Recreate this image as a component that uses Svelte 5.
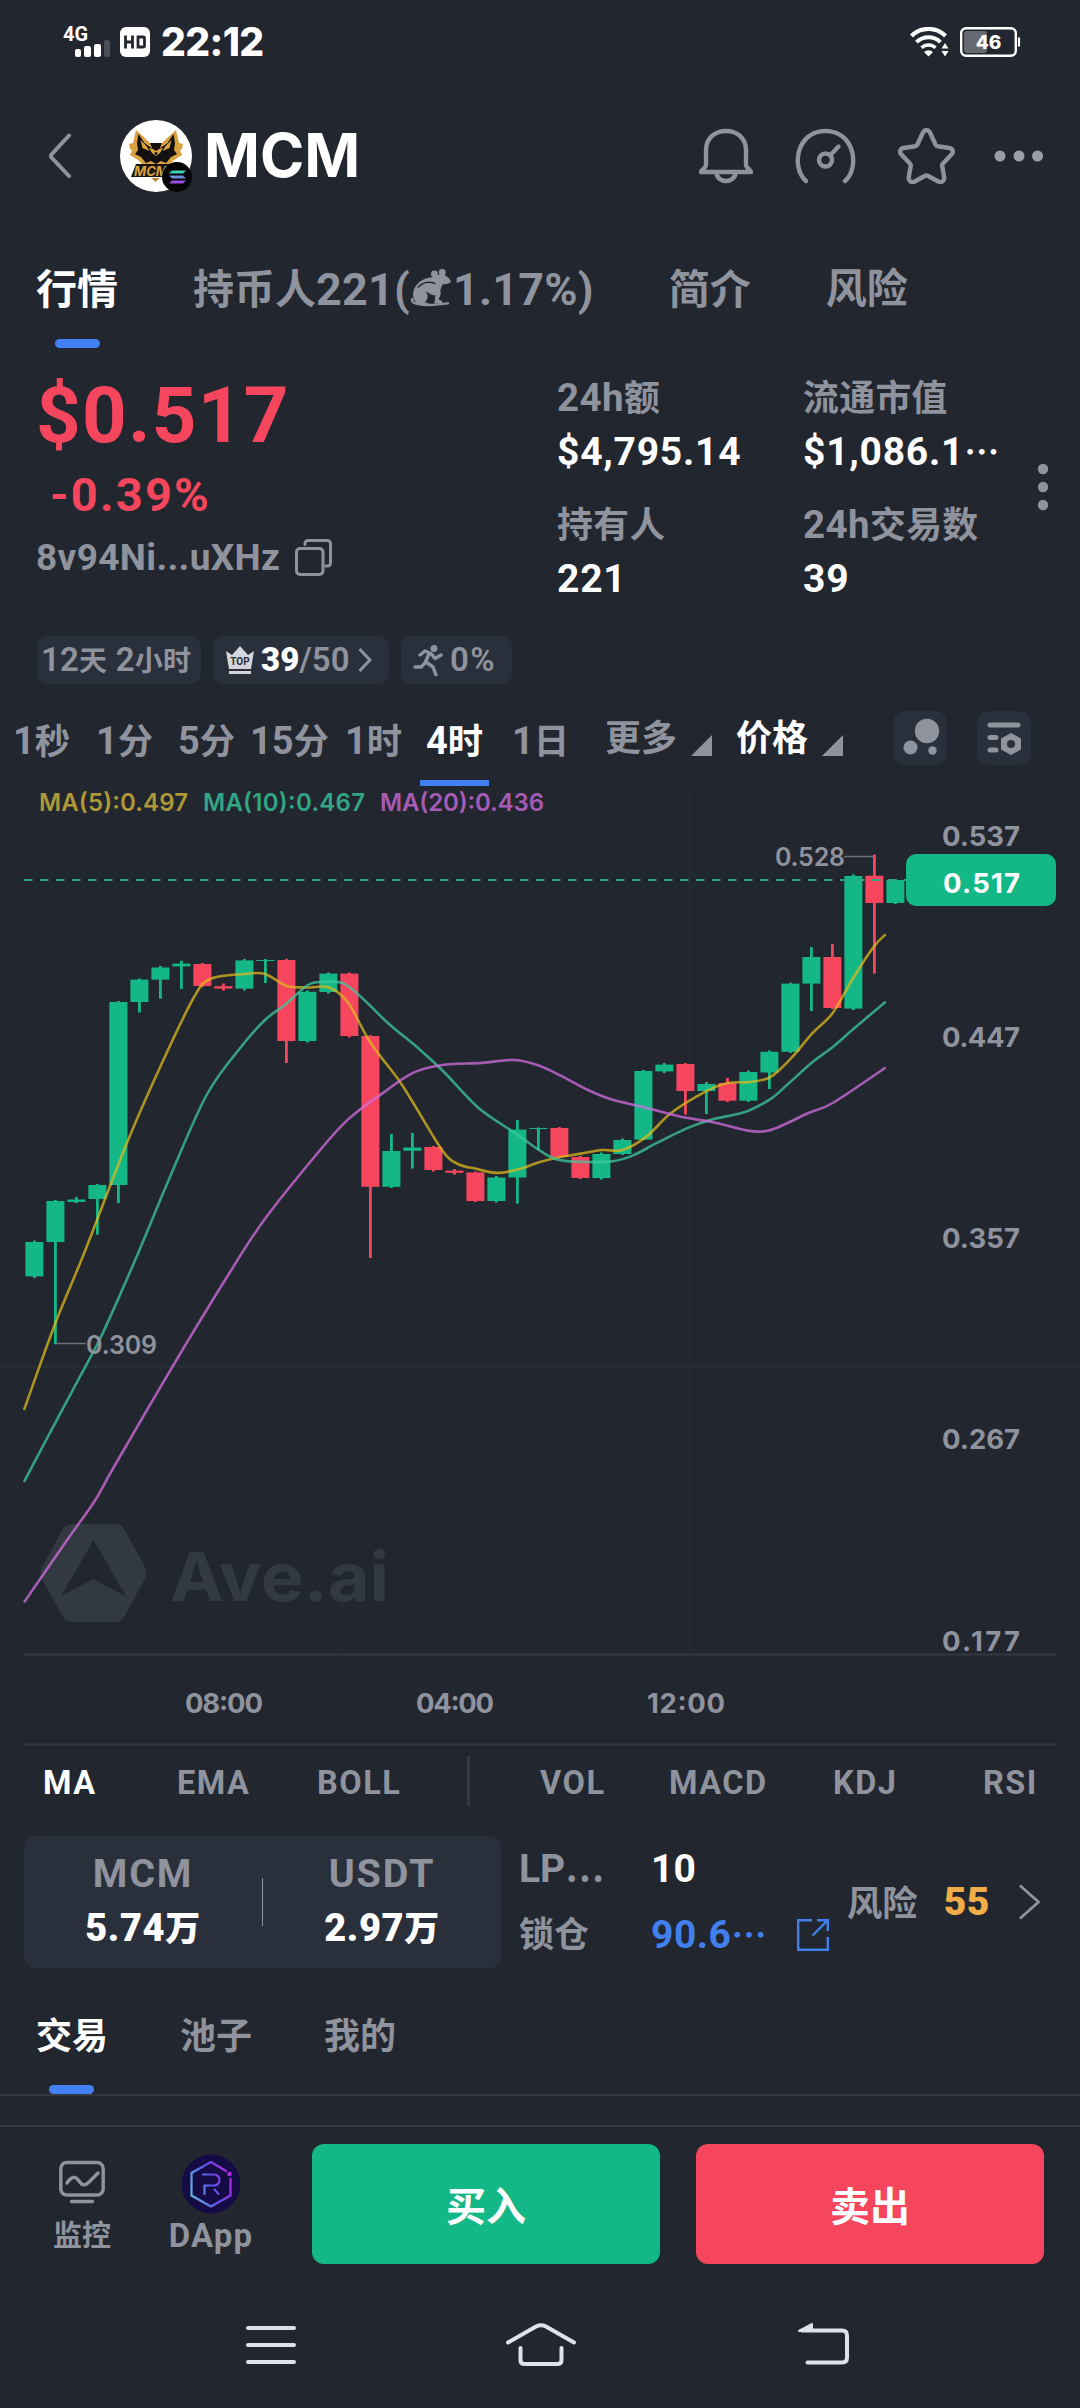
<script>
	const infoTabs = ['行情', 'holders', '简介', '风险'];
	let activeInfo = '行情';

	const stats = [
		{ num: '24h', han: '额', value: '$4,795.14' },
		{ num: '', han: '流通市值', value: '$1,086.1', more: true },
		{ num: '', han: '持有人', value: '221' },
		{ num: '24h', han: '交易数', value: '39' }
	];

	const periods = [
		['1', '秒'],
		['1', '分'],
		['5', '分'],
		['15', '分'],
		['1', '时'],
		['4', '时'],
		['1', '日']
	];
	let activePeriod = 5;

	const mainIndicators = ['MA', 'EMA', 'BOLL'];
	const subIndicators = ['VOL', 'MACD', 'KDJ', 'RSI'];
	let activeIndicator = 'MA';

	const listTabs = ['交易', '池子', '我的'];
	let activeList = '交易';

	// chart: [up, body top, body bottom, wick top, wick bottom]
	const candles = [
		[1, 1242, 1276.4, 1240.5, 1278],
		[1, 1201, 1242, 1200, 1344.3],
		[1, 1199.5, 1202, 1197, 1203],
		[1, 1185, 1199, 1184, 1234.6],
		[1, 1002, 1185, 1001, 1203],
		[1, 979.6, 1002, 978.6, 1012.5],
		[1, 967.5, 979.6, 966, 998.6],
		[1, 963.6, 966.4, 960.7, 989],
		[0, 964, 986, 963, 987],
		[0, 986.2, 988.6, 983.5, 990.5],
		[1, 960.4, 988.6, 959, 990.4],
		[1, 960, 961, 959, 983],
		[0, 960, 1041, 958.8, 1063],
		[1, 991.8, 1041, 990.5, 1042.5],
		[1, 973.6, 992, 972.5, 993.5],
		[0, 973.6, 1036, 972.5, 1037.5],
		[0, 1036, 1186.8, 1035, 1258],
		[1, 1151, 1186.8, 1134, 1188],
		[1, 1147.5, 1150.8, 1133, 1168.6],
		[0, 1147, 1170, 1146, 1171.5],
		[0, 1170.6, 1172.8, 1169, 1174.5],
		[0, 1172.5, 1201, 1171.5, 1202],
		[1, 1177.5, 1201, 1176, 1202.5],
		[1, 1129.6, 1177.5, 1120, 1203.6],
		[1, 1128, 1129, 1127.5, 1150],
		[0, 1128, 1157, 1127, 1158],
		[0, 1157, 1178, 1156, 1179],
		[1, 1154, 1178, 1152.5, 1179.5],
		[1, 1140, 1154, 1138.5, 1155],
		[1, 1071, 1139.6, 1070, 1140],
		[1, 1064.6, 1071.4, 1063, 1073],
		[0, 1064, 1091, 1063, 1114.6],
		[1, 1084, 1091, 1082, 1114],
		[0, 1083, 1100.7, 1078, 1102],
		[1, 1072, 1100.7, 1070.5, 1102],
		[1, 1051.8, 1072.5, 1050.5, 1089],
		[1, 983.6, 1051.8, 982.5, 1053],
		[1, 957, 983.6, 947, 1011],
		[0, 957, 1008, 944, 1009],
		[1, 876, 1008.6, 874.5, 1010],
		[0, 875.7, 903, 854.6, 973.6],
		[1, 880, 903, 879, 904]
	];
	const candleX = (i) => 34.4 + i * 21;

	const ma5 = [
		[24, 1410], [55.4, 1323], [85.4, 1250], [127.4, 1141.8], [162, 1063], [193, 999], [210, 979],
		[244.5, 974], [265, 974], [286, 985.7], [306.5, 987.5], [329, 987.5], [348, 1002.5], [370, 1042],
		[398, 1079], [413, 1102.5], [442.5, 1150.7], [458, 1164], [475, 1168.6], [496.6, 1172.9],
		[517.6, 1169.6], [540, 1162], [560.7, 1157], [581, 1153.6], [602, 1150], [622.6, 1150],
		[646.7, 1136.4], [671, 1113], [705, 1091.8], [727.7, 1083], [750, 1082], [770.7, 1076.8],
		[791.4, 1057.9], [812, 1033.6], [832.7, 1013], [853.4, 977.5], [874, 946.4], [885.7, 934.3]
	];
	const ma10 = [
		[24, 1481.8], [44.8, 1442.5], [79.2, 1378], [93.7, 1351], [106.7, 1324.6], [139.5, 1250],
		[168.7, 1180], [206.6, 1095], [241, 1047], [265, 1020], [286, 1004], [308, 985],
		[323.7, 982], [344, 983.6], [365, 1000.7], [389, 1024], [418, 1048], [444, 1072], [478.6, 1107.9],
		[516.5, 1134], [540, 1150.7], [557, 1159.6], [578, 1161.8], [612, 1161.4], [633, 1155.4],
		[657, 1142.9], [688, 1127.9], [712, 1119.6], [746.6, 1111.4], [770.7, 1098.9], [788, 1084],
		[812, 1062.5], [832.7, 1047], [853.4, 1029], [885.7, 1001.8]
	];
	const ma20 = [
		[24, 1602.5], [65.4, 1542.5], [94.7, 1501], [113.6, 1467.5], [172, 1367.5], [224, 1281.8],
		[263.4, 1221], [316.8, 1154], [347.8, 1119.6], [382, 1093.6], [413, 1072.9],
		[442.5, 1065], [482, 1062.9], [514.8, 1060], [540, 1066], [560.7, 1075.7], [588, 1090],
		[612, 1099.6], [643, 1107], [681, 1116.8], [712, 1122], [746.6, 1130.4], [763.8, 1131.4],
		[777.6, 1127.5], [808.6, 1113], [832.7, 1103], [885.7, 1067.5]
	];

	// smooth curve through all the points
	function curve(p) {
		let d = `M${p[0][0]} ${p[0][1]}`;
		for (let i = 0; i < p.length - 1; i++) {
			const a = p[i - 1] || p[i];
			const b = p[i];
			const c = p[i + 1];
			const e = p[i + 2] || c;
			d += `C${b[0] + (c[0] - a[0]) / 6} ${b[1] + (c[1] - a[1]) / 6} ${c[0] - (e[0] - b[0]) / 6} ${c[1] - (e[1] - b[1]) / 6} ${c[0]} ${c[1]}`;
		}
		return d;
	}

	const priceAxis = [
		['0.537', 846],
		['0.447', 1047],
		['0.357', 1248],
		['0.267', 1449],
		['0.177', 1650.5]
	];
	const timeAxis = [
		['08:00', 185],
		['04:00', 416],
		['12:00', 647]
	];
</script>

<div class="screen">
	<div class="status">
		<svg class="signal" viewBox="0 0 50 44" width="50" height="44">
			<text x="0" y="21" class="net" textLength="25" lengthAdjust="spacingAndGlyphs">4G</text>
			<rect x="12" y="29" width="6" height="8" rx="2" fill="#fff" />
			<rect x="21" y="26" width="7" height="11" rx="2" fill="#fff" />
			<rect x="31" y="24" width="7" height="13" rx="2" fill="#fff" />
			<rect x="41" y="20" width="6" height="17" rx="2" fill="#4b4f57" />
		</svg>
		<svg class="hd" viewBox="0 0 30 30" width="30" height="30">
			<rect width="30" height="30" rx="6" fill="#fff" />
			<path d="M5.500 8.500v13M12.500 8.500v13M5.500 15h7M18 10h5a1.500 1.500 0 0 1 1.500 1.500v7a1.500 1.500 0 0 1-1.500 1.500h-5z" fill="none" stroke="#22262e" stroke-width="2.800" />
		</svg>
		<span class="clock">22:12</span>
		<svg class="wifi" viewBox="0 0 39 30" width="39" height="30">
			<g fill="none" stroke="#fff" stroke-width="4.200">
				<path d="M1.500 9a24 24 0 0 1 34 0" />
				<path d="M6.500 15.200a17 17 0 0 1 24 0" stroke-width="3.800" />
				<path d="M11.500 20.800a10 10 0 0 1 14 0" stroke-width="3.400" />
			</g>
			<path d="M14 25a6.500 6.500 0 0 1 9 0l-4.500 4.500z" fill="#fff" />
			<path d="M31.500 21.500l3.500-5.500 3.500 5.500zM31.500 24l3.500 5.500 3.500-5.500z" fill="#fff" />
		</svg>
		<svg class="battery" viewBox="0 0 61 30" width="61" height="30">
			<rect x="4" y="4" width="23" height="22" rx="3" fill="#666a71" />
			<rect x="1.200" y="1.200" width="54.600" height="27.600" rx="5" fill="none" stroke="#fff" stroke-width="2.400" />
			<path d="M59 10.500v9" stroke="#fff" stroke-width="2.200" />
			<text x="28.500" y="22" text-anchor="middle" class="level">46</text>
		</svg>
	</div>

	<header>
		<svg viewBox="0 0 24 48" width="24" height="48" class="back">
			<path d="M21 3.500L3.500 22.500a2.500 2.500 0 0 0 0 3L21 44" />
		</svg>
		<div class="logo">
			<svg viewBox="0 0 72 72" width="72" height="72">
				<circle cx="36" cy="36" r="36" fill="#fff" />
				<path d="M16 10l11 10 3 3h12l3-3 11-10 3 13 4 1-1 5-2 1 2 5-8 5-6 6-5-2-7 4-7-4-5 2-6-6-8-5 2-5-2-1-1-5 4-1z" fill="#d9a13f" />
				<path d="M18.500 14l6 9 7 5h9l7-5 6-9 1.500 9-1 7 3 4-6 3-5 6-5-2-5 3-5-3-5 2-5-6-6-3 3-4-1-7z" fill="#131110" />
				<path d="M20.500 20l2 8 7 3-3-5zM51.500 20l-2 8-7 3 3-5z" fill="#d9a13f" />
				<path d="M30 23h12l-2 5-4 3-4-3z" fill="#131110" />
				<path d="M29 28l4 1 3 2 3-2 4-1-3 5-4 3-4-3z" fill="#d9a13f" />
				<circle cx="36" cy="33.500" r="1.400" fill="#131110" />
				<path d="M16 44h44l-5 13H11z" fill="#171412" />
				<text x="14" y="55.500" class="mark" textLength="34" lengthAdjust="spacingAndGlyphs">MCM</text>
				<path d="M31 58h9l-4.500 4z" fill="#b98a3a" />
			</svg>
			<svg class="chain" viewBox="0 0 30 30" width="30" height="30">
				<circle cx="15" cy="15" r="15" fill="#050507" />
				<path d="M10 8.500h14l-3 3H7z" fill="#3fd2b8" />
				<path d="M7 13.500h14l3 3H10z" fill="#6f8ddd" />
				<path d="M10 18.500h14l-3 3H7z" fill="#9a4fe8" />
			</svg>
		</div>
		<h1>MCM</h1>
		<div class="actions">
			<svg viewBox="0 0 54 56" width="54" height="56">
				<path d="M7 26v-4C7 10 16 3 27 3s20 7 20 19v15c0 3 5 5 5 7H2c0-2 5-4 5-7zM17.500 44c0 12 19 12 19 0" />
			</svg>
			<svg viewBox="0 0 61 56" width="61" height="56">
				<path d="M11 53C-4 40 1 3 30.500 3S65 40 50 53" />
				<circle cx="30.500" cy="32" r="6.500" />
				<path d="M35.500 27l8-8.500" />
			</svg>
			<svg viewBox="0 0 57 56" width="57" height="56">
				<path d="M25 4.500c1.500-3 5.500-3 7 0l5.500 12c.5 1 1 1.500 2 1.700l12 1.800c3 .5 4.500 4 2 6.500l-8.500 9c-.7.700-1 1.500-.8 2.500l2 11.500c.5 3.500-3 5.500-6 4l-10-5.500c-1-.6-2.500-.6-3.500 0l-10 5.500c-3 1.500-6.500-.5-6-4l2-11.500c.2-1-.1-1.800-.8-2.500l-8.500-9c-2.500-2.500-1-6 2-6.500l12-1.800c1-.2 1.500-.7 2-1.700z" />
			</svg>
			<svg viewBox="0 0 50 56" width="50" height="56" class="dots">
				<circle cx="6" cy="28" r="5.500" />
				<circle cx="25" cy="28" r="5.500" />
				<circle cx="43.500" cy="28" r="5.500" />
			</svg>
		</div>
	</header>

	<nav class="info-tabs">
		{#each infoTabs as tab}
			<button class:active={tab === activeInfo} on:click={() => (activeInfo = tab)}>
				{#if tab === 'holders'}
					持币人<span class="num">221(</span><svg viewBox="0 0 44 40" width="43" height="39" class="rat">
						<path d="M25 8c2-2 5-3 9-2 4 1 7 4 8 7-3 3-7 2-9 3l-2 6c1 4 0 6-2 9l4 2v2h-8l1-8c-5 0-6-3-9-3 2 3 1 8-2 10l4 1v2H9C2 33 1 23 7 16c5-6 12-7 18-8z" />
						<circle cx="25" cy="5" r="3.500" />
						<circle cx="33" cy="3.500" r="3.500" />
						<path d="M3 30c-5 6 10 9 37 5" fill="none" stroke="#8f939d" stroke-width="2.500" />
						<path d="M8 19c4-5 11-7 18-4M17 24c3 2 4 6 2 10" fill="none" stroke="#22262e" stroke-width="1.500" />
					</svg><span class="num">1.17%)</span>
				{:else}
					{tab}
				{/if}
			</button>
		{/each}
	</nav>

	<section class="quote">
		<div class="price">
			<div class="last">$0.517</div>
			<div class="change">-0.39%</div>
			<div class="address">
				<span>8v94Ni...uXHz</span>
				<svg viewBox="0 0 37 37" width="37" height="37">
					<rect x="1.500" y="9.500" width="26.500" height="26" rx="3.500" />
					<path d="M10 5.500V4.500a3 3 0 0 1 3-3h19.500a3 3 0 0 1 3 3V24a3 3 0 0 1-3 3H31" />
				</svg>
			</div>
		</div>
		<div class="stats">
			{#each stats as s}
				<div class="stat">
					<div class="label">{s.num}<span class="han">{s.han}</span></div>
					<div class="value">{s.value}{#if s.more}<span class="ell">⋯</span>{/if}</div>
				</div>
			{/each}
		</div>
		<svg class="more" viewBox="0 0 12 48" width="12" height="48">
			<circle cx="6" cy="6" r="5.200" />
			<circle cx="6" cy="24" r="5.200" />
			<circle cx="6" cy="42" r="5.200" />
		</svg>
	</section>

	<div class="chips">
		<span class="chip age">12<i>天</i> 2<i>小时</i></span>
		<span class="chip top">
			<svg viewBox="0 0 28 28" width="28" height="28">
				<path d="M0 5l6 4 8-9 8 9 6-4-3 18H3z" fill="#d3d5da" />
				<path d="M3 26.500h22" stroke="#d3d5da" stroke-width="3" />
				<text x="14" y="19" text-anchor="middle" class="crown">TOP</text>
			</svg>
			<b>39</b><span>/50</span>
			<svg viewBox="0 0 14 26" width="14" height="26" class="go"><path d="M1.500 2l10.500 11L1.500 24" /></svg>
		</span>
		<span class="chip run">
			<svg viewBox="0 0 31 31" width="31" height="31">
				<circle cx="21" cy="3.500" r="3.500" fill="#8f939d" />
				<path d="M7 10l5-4 6 2.500 4 5 6-3.500M16 9l-4 9-4 4H2M13 17l7 5 3 8" fill="none" stroke="#8f939d" stroke-width="3.400" stroke-linecap="round" stroke-linejoin="round" />
			</svg>
			<span>0%</span>
		</span>
	</div>

	<nav class="periods">
		{#each periods as [n, unit], i}
			<button class:active={i === activePeriod} on:click={() => (activePeriod = i)}>{n}<span class="han">{unit}</span></button>
		{/each}
		<span class="pick"><span>更多</span><i class="corner"></i></span>
		<span class="pick on"><span>价格</span><i class="corner"></i></span>
		<span class="tool">
			<svg viewBox="0 0 54 54" width="54" height="54">
				<circle cx="34" cy="20" r="12.200" />
				<circle cx="17.500" cy="36.500" r="7" />
				<circle cx="39.500" cy="39.500" r="4.200" />
			</svg>
		</span>
		<span class="tool">
			<svg viewBox="0 0 54 54" width="54" height="54">
				<path d="M13 14h28M13 26.500h6M13 39h6" stroke="#8f939d" stroke-width="5" stroke-linecap="round" />
				<path d="M34 23l9 5v10l-9 5-9-5V28z" stroke="#8f939d" stroke-width="2" stroke-linejoin="round" />
				<circle cx="34" cy="33" r="4" class="hole" />
			</svg>
		</span>
	</nav>

	<svg class="chart" viewBox="0 786 1080 960" width="1080" height="960">
		<!-- grid -->
		<path d="M341 786v868M689 786v868" stroke="#252a32" stroke-width="2" />
		<path d="M0 1366.500h1080" stroke="#2b3038" stroke-width="2" />
		<path d="M24 1654.500h1032M24 1744.500h1032" stroke="#343941" stroke-width="2" />

		<!-- watermark -->
		<g fill="#333941">
			<path fill-rule="evenodd" d="M72 1524h43q6 0 9 5l21 38q3 6 0 12l-21 38q-3 5-9 5H72q-6 0-9-5l-21-38q-3-6 0-12l21-38q3-5 9-5zM93.500 1540L61 1596l32.500-17 33 18z" />
			<text x="170" y="1600.500" class="brand" textLength="219" lengthAdjust="spacingAndGlyphs">Ave.ai</text>
		</g>

		<text x="39" y="811" class="ma" fill="#ae9838" textLength="149">MA(5):0.497</text>
		<text x="203" y="811" class="ma" fill="#32a585" textLength="162">MA(10):0.467</text>
		<text x="380" y="811" class="ma" fill="#a65cb6" textLength="164">MA(20):0.436</text>

		{#each candles as [up, top, bottom, high, low], i}
			<g fill={up ? '#14b886' : '#f6465d'}>
				<rect x={candleX(i) - 1.4} y={high} width="2.8" height={low - high} />
				<rect x={candleX(i) - 9} y={top} width="18" height={bottom - top} />
			</g>
		{/each}
		<path d="M24 880h882" stroke="#32a585" stroke-width="1.800" stroke-dasharray="8.500 7.500" />

		<g fill="none" stroke-width="2.600">
			<path d={curve(ma5)} stroke="#dcb81f" opacity="0.75" />
			<path d={curve(ma10)} stroke="#3ec9a0" opacity="0.75" />
			<path d={curve(ma20)} stroke="#d36fe2" opacity="0.75" />
		</g>

		<path d="M844 856.500h30M56 1343.500h30" stroke="#6d717a" stroke-width="1.500" />
		<text x="775" y="866" class="tip" textLength="70">0.528</text>
		<text x="86" y="1354" class="tip" textLength="71">0.309</text>

		{#each priceAxis as [label, y]}
			<text x="942" {y} class="axis" textLength="78">{label}</text>
		{/each}
		{#each timeAxis as [label, x]}
			<text {x} y="1712.500" class="axis" textLength="78">{label}</text>
		{/each}

		<rect x="906" y="854" width="150" height="52" rx="10" fill="#14b886" />
		<text x="943" y="892.500" class="axis current" textLength="77">0.517</text>
	</svg>

	<nav class="indicators">
		{#each mainIndicators as name}
			<button class:active={name === activeIndicator} on:click={() => (activeIndicator = name)}>{name}</button>
		{/each}
		<span class="split"></span>
		{#each subIndicators as name}
			<button>{name}</button>
		{/each}
	</nav>

	<section class="pool">
		<div class="pair">
			<div class="side"><span>MCM</span><b>5.74<i>万</i></b></div>
			<span class="line"></span>
			<div class="side"><span>USDT</span><b>2.97<i>万</i></b></div>
		</div>
		<div class="lock">
			<span class="key">LP<span class="ell">⋯</span></span>
			<span class="val">10</span>
			<span class="key"><span class="han">锁仓</span></span>
			<span class="val link">90.6<span class="ell">⋯</span></span>
			<svg viewBox="0 0 32 32" width="32" height="32">
				<path d="M15 1.200H1.200v29.600h29.600V18M20 1.200h10.800V12M30.500 1.500L15.500 16.500" />
			</svg>
		</div>
		<div class="risk">
			<span class="han">风险</span>
			<b>55</b>
			<svg viewBox="0 0 23 36" width="23" height="36"><path d="M2 1.500l18.500 16.500L2 34.500" /></svg>
		</div>
	</section>

	<nav class="list-tabs">
		{#each listTabs as tab}
			<button class:active={tab === activeList} on:click={() => (activeList = tab)}>{tab}</button>
		{/each}
	</nav>

	<footer>
		<div class="entry">
			<svg viewBox="0 0 46 60" width="46" height="60">
				<rect x="1.800" y="8.500" width="42.400" height="32.500" rx="6" />
				<path d="M12.500 47.500h21M8 29c4-6 8-8 12-2s7 4 10 1l9-9" />
			</svg>
			<span class="cn">监控</span>
		</div>
		<div class="entry dapp">
			<svg viewBox="0 0 60 60" width="60" height="60">
				<defs>
					<linearGradient id="ray" x1="0" y1="0.700" x2="1" y2="0.300">
						<stop offset="0" stop-color="#5fb4e0" />
						<stop offset="0.500" stop-color="#5a55e8" />
						<stop offset="1" stop-color="#b02be0" />
					</linearGradient>
				</defs>
				<circle cx="30" cy="30" r="29.500" fill="#160c45" />
				<path class="ray" d="M45 17L30 8 10.500 19v22.500L30 52.500l19.500-11V25M22 20.500h11a5.500 5.500 0 0 1 0 11h-9.500V40M33.500 35.500l4 4.500" />
				<circle cx="48.500" cy="20" r="2.300" fill="#a92be0" />
			</svg>
			<span>DApp</span>
		</div>
		<button class="buy">买入</button>
		<button class="sell">卖出</button>
	</footer>

	<div class="system">
		<svg viewBox="0 0 50 50" width="50" height="50"><path d="M2 8h46M2 25h46M2 42h46" /></svg>
		<svg viewBox="0 0 72 50" width="72" height="50">
			<path d="M3 22.500L31 6.500q5-2.500 10 0l28 16M15.500 28v12q0 4 4 4h33q4 0 4-4V28" />
		</svg>
		<svg viewBox="0 0 52 50" width="52" height="50">
			<path d="M4 10.500h40q5 0 5 5v22q0 5-5 5H9.500" />
			<path d="M1 11L14 4v6z" fill="#dfe2ea" stroke-width="2" stroke-linejoin="round" />
		</svg>
	</div>
</div>

<style>
	:global(body) {
		margin: 0;
		background: #22262e;
	}
	.screen {
		width: 1080px;
		height: 2408px;
		overflow: hidden;
		display: flex;
		flex-direction: column;
		background: #22262e;
		color: #8f939d;
		font-family: Roboto, 'Noto Sans CJK SC', sans-serif;
		font-weight: 700;
	}
	.screen > * {
		flex: none;
	}
	button {
		border: 0;
		padding: 0;
		background: none;
		color: inherit;
		font: inherit;
		white-space: nowrap;
	}
	svg {
		display: block;
		flex: none;
	}
	i {
		font-style: normal;
	}
	.active {
		color: #fff;
	}
	.han {
		font-size: 0.93em;
	}

	/* status bar */
	.status {
		height: 84px;
		display: flex;
		align-items: center;
		padding-left: 63px;
		box-sizing: border-box;
		color: #fff;
	}
	.net {
		font-size: 20px;
		fill: #fff;
	}
	.hd {
		margin-left: 7px;
	}
	.clock {
		margin-left: 11px;
		font: 800 39px/84px Inter, sans-serif;
		letter-spacing: -0.6px;
	}
	.wifi {
		margin-left: auto;
	}
	.battery {
		margin: 0 59px 0 11px;
	}
	.level {
		font: 800 19px Inter, sans-serif;
		fill: #fff;
	}

	/* title row */
	header {
		height: 144px;
		display: flex;
		align-items: center;
		padding: 0 36px 0 48px;
	}
	.back path {
		fill: none;
		stroke: #8f939d;
		stroke-width: 4;
		stroke-linecap: round;
	}
	.logo {
		position: relative;
		margin-left: 48px;
	}
	.chain {
		position: absolute;
		right: 0;
		bottom: 0;
	}
	.mark {
		font: italic 700 13px Inter, sans-serif;
		fill: #d9a13f;
	}
	h1 {
		margin: -2px 0 0 12px;
		color: #fff;
		font: 700 60px/80px Inter, sans-serif;
	}
	.actions {
		margin: -1px 0 0 auto;
		display: flex;
		align-items: center;
		gap: 42px;
	}
	.actions svg {
		fill: none;
		stroke: #8f939d;
		stroke-width: 4.4;
		stroke-linecap: round;
		stroke-linejoin: round;
	}
	.actions .dots {
		fill: #9a9ea6;
		stroke: none;
		margin-left: -3px;
	}

	/* info tabs */
	.info-tabs {
		height: 120px;
		display: flex;
		gap: 75px;
		padding-left: 36px;
		font-size: 41px;
	}
	.info-tabs button {
		position: relative;
		height: 120px;
		line-height: 60px;
		padding-top: 4px;
		box-sizing: border-box;
		display: flex;
		align-items: center;
	}
	.info-tabs button:last-child {
		padding-top: 1px;
	}
	.info-tabs .active::after {
		content: '';
		position: absolute;
		left: 19px;
		bottom: 0;
		width: 45px;
		height: 9px;
		border-radius: 5px;
		background: #4180f5;
	}
	.info-tabs .num {
		font-size: 45px;
		letter-spacing: 0.2px;
	}
	.rat {
		fill: #8f939d;
		margin-top: -4px;
	}

	/* price and stats */
	.quote {
		height: 288px;
		display: flex;
		padding-left: 36px;
	}
	.price {
		width: 521px;
		padding-top: 28px;
		box-sizing: border-box;
	}
	.last {
		color: #f6465d;
		font-size: 78px;
		line-height: 80px;
		letter-spacing: 1.2px;
	}
	.change {
		color: #f6465d;
		font-size: 47px;
		line-height: 78px;
		padding-left: 14px;
		letter-spacing: 2.200px;
	}
	.address {
		display: flex;
		align-items: center;
		gap: 15px;
		font-size: 37px;
		line-height: 44px;
		letter-spacing: 0.35px;
	}
	.address span {
		padding-top: 2px;
	}
	.address svg {
		fill: none;
		stroke: #8f939d;
		stroke-width: 3;
		stroke-linecap: round;
	}
	.stats {
		display: grid;
		grid-template-columns: 246px 216px;
		grid-template-rows: 127px 127px;
		padding-top: 23px;
	}
	.label {
		font-size: 38.500px;
		line-height: 54px;
		letter-spacing: 0.4px;
	}
	.value {
		color: #fff;
		font-size: 39px;
		height: 54px;
		line-height: 53px;
		letter-spacing: 0.75px;
		white-space: nowrap;
	}
	.ell {
		font-family: 'Noto Sans CJK SC', sans-serif;
		font-size: 0.9em;
		line-height: 0;
	}
	.more {
		margin: 115px 0 0 18px;
		fill: #8f939d;
	}

	/* chips */
	.chips {
		display: flex;
		gap: 12px;
		padding-left: 37px;
	}
	.chip {
		display: flex;
		align-items: center;
		height: 48px;
		border-radius: 10px;
		background: #29303b;
		box-sizing: border-box;
		font-size: 33px;
		font-weight: 600;
		line-height: 48px;
		white-space: nowrap;
	}
	.age {
		width: 164px;
		display: block;
		padding-left: 4px;
		letter-spacing: 0.2px;
	}
	.age i {
		font-size: 28px;
	}
	.top {
		width: 176px;
		padding-left: 13px;
	}
	.top b {
		color: #fff;
		margin-left: 7px;
	}
	.crown {
		font: 700 10px Roboto, sans-serif;
		fill: #29303b;
	}
	.go {
		margin-left: 8px;
	}
	.go path {
		fill: none;
		stroke: #8f939d;
		stroke-width: 3;
	}
	.run {
		width: 111px;
		padding-left: 12px;
		gap: 6px;
		letter-spacing: 1.5px;
	}

	/* period row */
	.periods {
		height: 102px;
		padding-top: 27px;
		box-sizing: border-box;
		display: grid;
		grid-template-columns: 83px 82px 72px 95px 81px 86px 93px 131px 157px 84px 54px;
		padding-left: 13px;
		font-size: 38px;
	}
	.periods button {
		position: relative;
		justify-self: start;
		height: 75px;
		padding-bottom: 15px;
		box-sizing: border-box;
		line-height: 60px;
		display: block;
		text-align: left;
	}
	.periods .active::after {
		content: '';
		position: absolute;
		left: -6px;
		right: -6px;
		bottom: 0;
		height: 6px;
		background: #4180f5;
	}
	.pick {
		display: flex;
		gap: 14px;
		font-size: 36px;
		line-height: 57px;
	}
	.on {
		color: #fff;
	}
	.corner {
		width: 21px;
		height: 21px;
		margin-top: 24px;
		background: #8f939d;
		clip-path: polygon(100% 0, 100% 100%, 0 100%);
	}
	.tool {
		width: 54px;
		height: 54px;
		border-radius: 12px;
		background: #29303b;
	}
	.tool svg {
		fill: #8f939d;
	}
	.tool .hole {
		fill: #29303b;
	}

	/* chart texts */
	.ma {
		font: 600 24px Inter, sans-serif;
	}
	.tip {
		font: 600 25px Inter, sans-serif;
		fill: #8f939d;
	}
	.axis {
		font: 700 27.500px Inter, sans-serif;
		fill: #8f939d;
	}
	.current {
		fill: #fff;
	}
	.brand {
		font: 700 67px Inter, sans-serif;
	}

	/* indicators */
	.indicators {
		height: 90px;
		display: grid;
		grid-template-columns: 134px 140px 150px 73px 129px 164px 150px 60px;
		padding-left: 43px;
		font-size: 32.500px;
		line-height: 74px;
		letter-spacing: 1.5px;
	}
	.indicators button {
		height: 74px;
		text-align: left;
		letter-spacing: inherit;
	}
	.split {
		width: 3px;
		height: 50px;
		margin-top: 10px;
		background: #363b43;
	}

	/* pool */
	.pool {
		height: 132px;
		display: flex;
		padding-left: 24px;
	}
	.pair {
		width: 477px;
		border-radius: 12px;
		background: #2a303b;
		display: flex;
		align-items: center;
	}
	.side {
		width: 238px;
		display: flex;
		flex-direction: column;
		text-align: center;
		font-size: 39.500px;
		line-height: 54px;
		letter-spacing: 1.800px;
	}
	.side b {
		color: #fff;
		font-size: 38px;
		letter-spacing: 0.6px;
	}
	.side i {
		font-size: 35px;
	}
	.line {
		width: 1px;
		height: 48px;
		background: #8f939d;
	}
	.lock {
		width: 328px;
		margin-left: 18px;
		display: grid;
		grid-template-columns: 132px 146px 32px;
		grid-template-rows: 66px 66px;
		align-items: center;
		font-size: 39px;
		line-height: 66px;
	}
	.val {
		color: #fff;
	}
	.link {
		color: #4180ec;
		letter-spacing: 0.5px;
	}
	.lock .key .han {
		font-size: 35px;
	}
	.lock svg {
		fill: none;
		stroke: #4180ec;
		stroke-width: 2.4;
	}
	.val:nth-child(2) {
		grid-column: 2 / 4;
	}
	.risk {
		height: 132px;
		display: flex;
		align-items: center;
		font-size: 38px;
	}
	.risk .han {
		margin-top: -4px;
	}
	.risk b {
		color: #f0ad48;
		margin: 0 28px 0 26px;
		font-size: 39px;
		letter-spacing: 0.5px;
	}
	.risk path {
		fill: none;
		stroke: #8f939d;
		stroke-width: 2.8;
	}

	/* list tabs */
	.list-tabs {
		height: 128px;
		box-sizing: border-box;
		border-bottom: 2px solid #343941;
		display: flex;
		gap: 72px;
		padding-left: 36px;
		font-size: 36px;
	}
	.list-tabs button {
		position: relative;
		height: 126px;
		line-height: 139px;
	}
	.list-tabs .active::after {
		content: '';
		position: absolute;
		left: 13px;
		bottom: 0;
		width: 45px;
		height: 9px;
		border-radius: 5px;
		background: #4180f5;
	}

	/* bottom bar */
	footer {
		height: 140px;
		margin-top: 29px;
		border-top: 2px solid #343941;
		padding-top: 17px;
		display: flex;
		padding-left: 37px;
	}
	.entry {
		width: 90px;
		padding-top: 10px;
		display: flex;
		flex-direction: column;
		align-items: center;
		font-size: 33px;
		line-height: 44px;
		letter-spacing: 1.2px;
	}
	.entry svg {
		fill: none;
		stroke: #8f939d;
		stroke-width: 3.4;
		stroke-linecap: round;
	}
	.entry .cn {
		font-size: 29px;
		line-height: 44px;
		letter-spacing: 0;
	}
	.dapp {
		margin-left: 39px;
	}
	.entry .ray {
		stroke: url(#ray);
		stroke-width: 2.2;
	}
	.dapp circle {
		stroke: none;
	}
	.buy,
	.sell {
		width: 348px;
		height: 120px;
		border-radius: 12px;
		color: #fff;
		font-size: 40px;
	}
	.buy {
		margin-left: 56px;
		background: #14b886;
	}
	.sell {
		margin-left: 36px;
		background: #f6465d;
	}

	/* system navigation */
	.system {
		display: flex;
		padding: 36px 0 0 246px;
	}
	.system svg {
		fill: none;
		stroke: #dfe2ea;
		stroke-width: 4;
		stroke-linecap: round;
	}
	.system svg:nth-child(2) {
		margin-left: 209px;
	}
	.system svg:nth-child(3) {
		margin-left: 221px;
	}
</style>
